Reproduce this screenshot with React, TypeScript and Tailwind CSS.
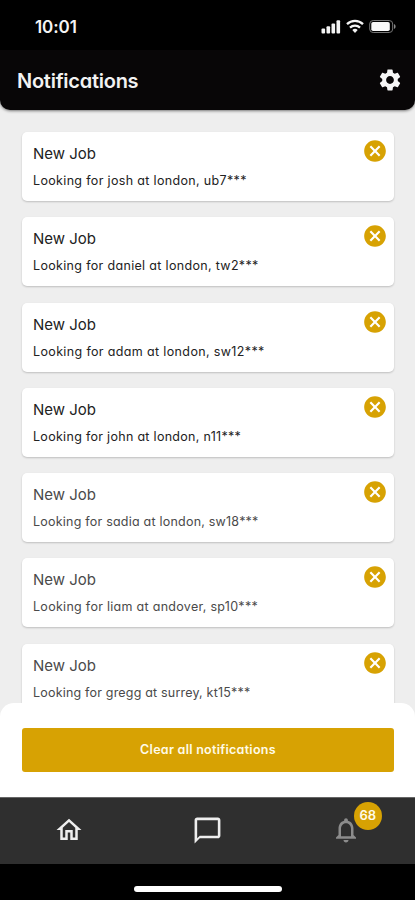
import {
  MdCancel,
  MdChatBubbleOutline,
  MdNotificationsNone,
  MdOutlineHome,
  MdSettings,
} from "react-icons/md"

const jobs = [
  { text: "Looking for josh at london, ub7***", tracking: "tracking-[0.34px]", color: "text-[#222]" },
  { text: "Looking for daniel at london, tw2***", tracking: "tracking-[0.33px]", color: "text-[#222]" },
  { text: "Looking for adam at london, sw12***", tracking: "tracking-[0.36px]", color: "text-[#222]" },
  { text: "Looking for john at london, n11***", tracking: "tracking-[0.3px]", color: "text-[#222]" },
  { text: "Looking for sadia at london, sw18***", tracking: "tracking-[0.22px]", color: "text-[#4a4a4a]" },
  { text: "Looking for liam at andover, sp10***", tracking: "tracking-[0.29px]", color: "text-[#4a4a4a]" },
  { text: "Looking for gregg at surrey, kt15***", tracking: "tracking-[0.19px]", color: "text-[#4a4a4a]" },
]

const StatusBar = () => (
  <div className="flex h-[50px] shrink-0 items-start justify-between bg-black pr-[19px] pl-[35px]">
    <span className="mt-[15px] text-[17px] leading-6 font-semibold tracking-[-0.1px] text-[#f4f4f4]">10:01</span>
    <div className="mt-[19px] flex items-center gap-[5px]">
      {/* Signal */}
      <svg width="20" height="15" viewBox="0 0 20 15" fill="#f4f4f4">
        <rect x="0.5" y="9.5" width="3.6" height="5" rx="1" />
        <rect x="5.5" y="7.2" width="3.6" height="7.3" rx="1" />
        <rect x="10.5" y="4.4" width="3.6" height="10.1" rx="1" />
        <rect x="15.5" y="1.2" width="3.6" height="13.3" rx="1" />
      </svg>
      {/* Wifi */}
      <svg width="18" height="15" viewBox="0 0 18 15" fill="none" stroke="#f4f4f4" strokeWidth="2.3">
        <path d="M1 5.2a11.5 11.5 0 0 1 16 0" />
        <path d="M4 8.6a7.3 7.3 0 0 1 10 0" />
        <path d="M6.3 11a4 4 0 0 1 5.4 0L9 14z" fill="#f4f4f4" stroke="none" />
      </svg>
      {/* Battery */}
      <svg width="27" height="15" viewBox="0 0 27 15" fill="none">
        <rect x="0.7" y="1.500" width="23" height="12" rx="3.5" stroke="#777" />
        <rect x="2.3" y="3" width="18.5" height="9" rx="1.8" fill="#f8f8f8" />
        <path d="M25 5v5c1-.4 1.6-1.400 1.600-2.500S26 5.400 25 5z" fill="#888" />
      </svg>
    </div>
  </div>
)

const JobCard = ({ text, tracking, color }: { text: string; tracking: string; color: string }) => (
  <div className="flex h-[69px] shrink-0 justify-between rounded-[5px] bg-white pt-[6px] pr-[6px] pl-[11px] shadow-[0_1px_2px_rgba(0,0,0,0.2)]">
    <div className={color}>
      <h2 className="mt-[5px] text-[15px] leading-[22px]">New Job</h2>
      <p className={`mt-[7px] text-[12.5px] leading-[18px] whitespace-nowrap ${tracking}`}>{text}</p>
    </div>
    <MdCancel className="size-[26px] text-[#d7a203]" />
  </div>
)

export default function App() {
  return (
    <div className="flex h-[900px] w-[415px] flex-col overflow-hidden bg-[#eee] font-['Inter','Liberation_Sans',sans-serif] [font-feature-settings:'cv11']">
      <StatusBar />

      {/* Header */}
      <header className="flex h-[60px] shrink-0 items-center justify-between rounded-b-[10px] bg-[#080607] pr-[12px] pl-[17px] shadow-[0_1px_3px_rgba(0,0,0,0.5)]">
        <h1 className="pt-[2px] text-[20px] font-semibold tracking-[-0.25px] text-[#f2f2f2]">Notifications</h1>
        <MdSettings className="size-[26px] text-[#f6f6f6]" />
      </header>

      {/* Jobs */}
      <main className="flex min-h-0 flex-1 flex-col gap-[16.3px] overflow-hidden pt-[22px] pr-[21px] pl-[22px]">
        {jobs.map((job) => (
          <JobCard key={job.text} {...job} />
        ))}
      </main>

      <div className="z-10 -mt-3 h-[94px] shrink-0 rounded-t-[14px] bg-white pt-[25px] pr-[21px] pl-[22px]">
        <button className="h-[44px] w-full rounded-[3px] bg-[#d7a203] text-[12.5px] font-semibold tracking-[0.28px] text-[#fffbe8]">
          Clear all notifications
        </button>
      </div>

      {/* Tab bar */}
      <nav className="grid h-[67px] shrink-0 grid-cols-3 items-center justify-items-center border-t border-[#666] bg-[#2f2f2f] pb-[2px] text-[#eee]">
        <MdOutlineHome className="size-[30px]" />
        <MdChatBubbleOutline className="size-[31px]" />
        <div className="relative">
          <MdNotificationsNone className="size-[30px] text-[#8c8c8c]" />
          <span className="absolute -top-[13px] left-[23px] flex size-[28px] items-center justify-center rounded-full bg-[#d7a203] text-[13px] font-semibold text-[#fffbe8]">
            68
          </span>
        </div>
      </nav>

      <div className="flex h-[36px] shrink-0 justify-center bg-black pt-[22px]">
        <div className="h-[6px] w-[148px] rounded-full bg-white" />
      </div>
    </div>
  )
}
